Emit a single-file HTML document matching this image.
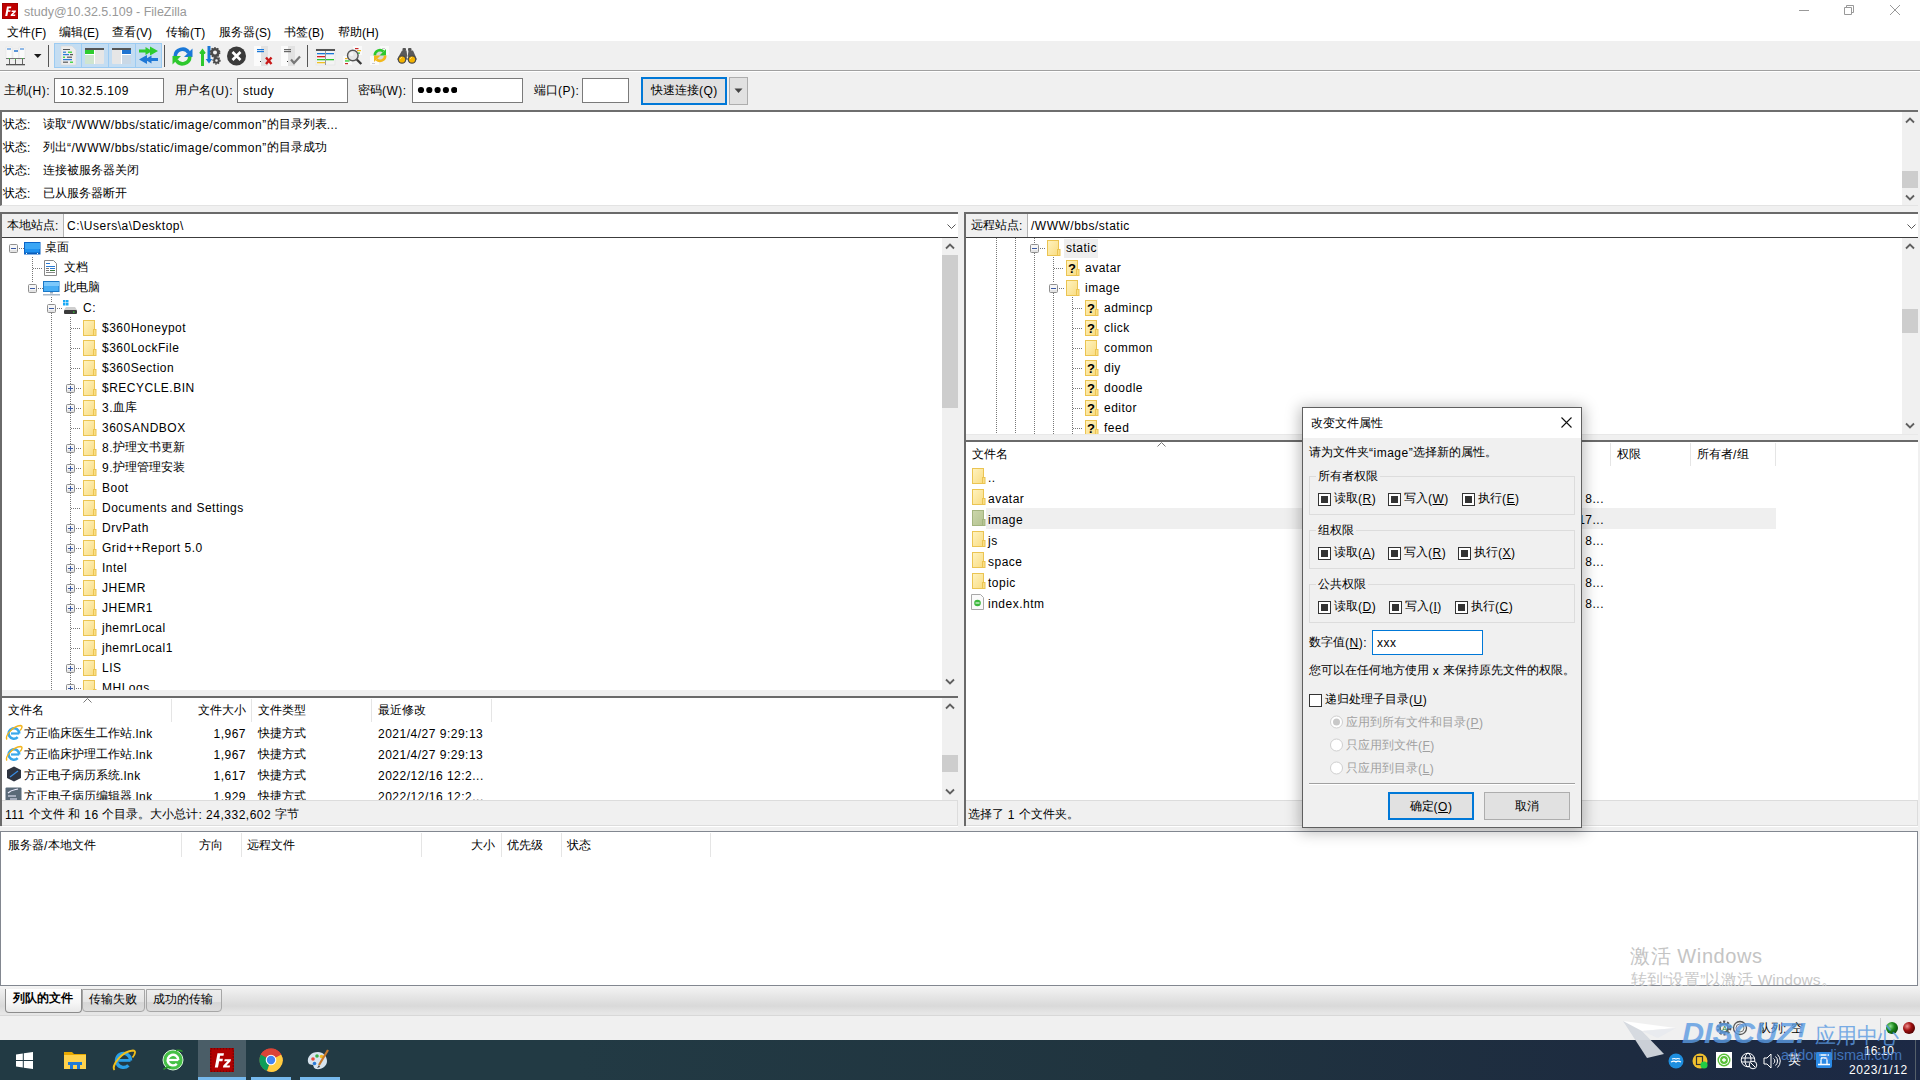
<!DOCTYPE html>
<html><head><meta charset="utf-8">
<style>
*{box-sizing:border-box;margin:0;padding:0}
html,body{width:1920px;height:1080px;overflow:hidden;background:#f0f0f0;font-family:"Liberation Sans",sans-serif;font-size:12px;color:#000}
.a{position:absolute}
.t{position:absolute;white-space:nowrap;line-height:16px;height:16px}
.w{background:#fff}
.l{letter-spacing:.5px;position:relative;top:1px}
.n .l{letter-spacing:0}
.sb{position:absolute;background:#f0f0f0}
.thumb{position:absolute;background:#cdcdcd}
.chev{position:absolute;width:8px;height:8px;border-left:2px solid #606060;border-top:2px solid #606060}
.hd{position:absolute;width:1px;background:#e5e5e5}
.fold{position:absolute;width:14px;height:16px}
</style></head><body>
<svg width="0" height="0" style="position:absolute"><defs><linearGradient id="fy" x1="0" y1="0" x2="1" y2="1"><stop offset="0" stop-color="#fff3c0"/><stop offset="1" stop-color="#f9dc82"/></linearGradient><linearGradient id="fg" x1="0" y1="0" x2="1" y2="1"><stop offset="0" stop-color="#ccd7ac"/><stop offset="1" stop-color="#b3c290"/></linearGradient></defs></svg>

<!-- title + menu (white) -->
<div class="a w" style="left:0;top:0;width:1920px;height:41px"></div>
<svg class="a" style="left:2px;top:3px" width="16" height="16" viewBox="0 0 16 16"><rect x="0" y="0" width="16" height="16" fill="#bf0000"/><rect x="0.5" y="0.5" width="15" height="15" fill="none" stroke="#8a0000" stroke-dasharray="1 1"/><path d="M3.2 13 L5 3.5 H9.3 L9 5.2 H6.7 L6.4 7.2 H8.6 L8.3 8.8 H6.1 L5.3 13 Z M8.6 13 L8.9 11.6 L11.6 8.9 H9.5 L9.8 7.5 H14 L13.7 8.9 L11 11.6 H13.4 L13.1 13 Z" fill="#fff"/></svg>
<div class="t n" style="left:24px;top:3px;color:#999;font-size:12.5px"><span class="l">study@10.32.5.109 - FileZilla</span></div>
<div class="a" style="left:1799px;top:10px;width:10px;height:1px;background:#999"></div>
<svg class="a" style="left:1844px;top:5px" width="11" height="11"><path d="M.5 2.5h7v7h-7z M2.5 2.5v-2h7v7h-2" fill="none" stroke="#999" stroke-width="1"/></svg>
<svg class="a" style="left:1890px;top:5px" width="10" height="10"><path d="M0 0L10 10M10 0L0 10" stroke="#999" stroke-width="1"/></svg>
<div class="t n" style="left:7px;top:24px">文件<span class="l">(F)</span></div>
<div class="t n" style="left:59px;top:24px">编辑<span class="l">(E)</span></div>
<div class="t n" style="left:112px;top:24px">查看<span class="l">(V)</span></div>
<div class="t n" style="left:166px;top:24px">传输<span class="l">(T)</span></div>
<div class="t n" style="left:219px;top:24px">服务器<span class="l">(S)</span></div>
<div class="t n" style="left:284px;top:24px">书签<span class="l">(B)</span></div>
<div class="t n" style="left:338px;top:24px">帮助<span class="l">(H)</span></div>

<!-- toolbar -->
<div class="a" style="left:0;top:70px;width:1920px;height:1px;background:#a0a0a0"></div>
<div class="a" style="left:0;top:71px;width:1920px;height:1px;background:#fff"></div>
<svg class="a" style="left:0;top:41px" width="430" height="29" viewBox="0 41 430 29">
<!-- site manager -->
<g>
<rect x="6" y="47" width="6" height="12" fill="#fafafa" stroke="#ddd" stroke-width=".5"/><rect x="7" y="48" width="4" height="2" fill="#8fb8e6"/>
<rect x="13" y="49" width="6" height="11" fill="#fafafa" stroke="#ddd" stroke-width=".5"/><rect x="14" y="50" width="4" height="2" fill="#5c97d9"/>
<rect x="19" y="47" width="6" height="12" fill="#fafafa" stroke="#ddd" stroke-width=".5"/><rect x="20" y="48" width="4" height="2" fill="#8fb8e6"/>
<rect x="6" y="58" width="19" height="1" fill="#777"/><rect x="9" y="58" width="1" height="1" fill="#3c3"/><rect x="15" y="59" width="1" height="1" fill="#3c3"/><rect x="22" y="58" width="1" height="1" fill="#3c3"/>
<rect x="9" y="59" width="1" height="5" fill="#666"/><rect x="15" y="60" width="1" height="4" fill="#666"/><rect x="22" y="59" width="1" height="5" fill="#666"/>
<rect x="6" y="64" width="19" height="1.3" fill="#555"/>
</g>
<path d="M34 54h7.5l-3.75 4z" fill="#1a1a1a"/>
<rect x="48" y="45" width="1" height="22" fill="#555"/>
<!-- toggle group -->
<rect x="54.5" y="43.5" width="107" height="24" fill="#c4ddf2" stroke="#9ccbf2"/>
<rect x="81" y="44" width="1" height="23" fill="#9ccbf2"/><rect x="108" y="44" width="1" height="23" fill="#9ccbf2"/><rect x="135" y="44" width="1" height="23" fill="#9ccbf2"/>
<!-- log icon -->
<path d="M61 46h11l4 4v15h-15z" fill="#ededed" stroke="#d6d6d6" stroke-width=".6"/>
<rect x="63" y="49" width="7" height="1" fill="#555"/>
<rect x="63" y="51.5" width="3" height="1.5" fill="#4a90d9"/><rect x="68" y="51.5" width="4" height="1.5" fill="#4cd44c"/>
<rect x="63" y="54" width="6" height="1.2" fill="#2b7bd6"/><rect x="70" y="54" width="3" height="1.2" fill="#555"/>
<rect x="63" y="56.5" width="2" height="1.5" fill="#4cd44c"/><rect x="67" y="56.5" width="5" height="1.5" fill="#777"/>
<rect x="63" y="59" width="9" height="1.2" fill="#2b7bd6"/>
<rect x="63" y="61.5" width="5" height="1.5" fill="#777"/><rect x="70" y="61.5" width="3" height="1.5" fill="#4cd44c"/>
<!-- local tree icon -->
<rect x="85" y="48" width="19" height="16" rx="1" fill="#e6e6e6"/><rect x="85" y="48" width="19" height="2" fill="#555"/>
<rect x="85" y="50" width="9" height="4" fill="#2ecc2e"/><rect x="85" y="55" width="9" height="9" fill="#cfe5cf"/><rect x="94" y="50" width="1" height="14" fill="#fff"/><rect x="85" y="54" width="9" height="1" fill="#fff"/>
<!-- remote tree icon -->
<rect x="112" y="48" width="19" height="16" rx="1" fill="#e6e6e6"/><rect x="112" y="48" width="19" height="2" fill="#555"/>
<rect x="122" y="50" width="9" height="4" fill="#1f74d1"/><rect x="122" y="55" width="9" height="9" fill="#c9d8e6"/><rect x="121" y="50" width="1" height="14" fill="#fff"/><rect x="122" y="54" width="9" height="1" fill="#fff"/>
<!-- queue icon -->
<path d="M139 49.5h11v3h-11z M150 46.5l8 4.5-8 4.5z M145.5 47l6.5 4-6.5 4z" fill="#2dcc2d"/>
<path d="M158 58h-11v3h11z M147 55l-8 4.5 8 4.5z M151.5 55.5l-6.5 4 6.5 4z" fill="#1f78d6"/>
<rect x="164" y="45" width="1" height="22" fill="#555"/>
<!-- refresh -->
<path d="M175.2 56.5A7.3 7.3 0 0 1 188.8 52.8" fill="none" stroke="#1a78d8" stroke-width="3.6"/><path d="M192.5 48.5v8.5h-8.5z" fill="#1a78d8"/>
<path d="M189.8 56.5A7.3 7.3 0 0 1 176.2 60.2" fill="none" stroke="#2dc82d" stroke-width="3.6"/><path d="M172.5 64.5v-8.5h8.5z" fill="#2dc82d"/>
<!-- process queue -->
<path d="M201 66v-13h-1.8l3.3-4.5 3.3 4.5h-1.8v13z M199.5 54l3-4 3 4z" fill="#2dc82d"/><path d="M207.5 46h3v13h1.8l-3.3 4.5-3.3-4.5h1.8z" fill="#1a78d8"/>
<circle cx="215" cy="52.5" r="3.3" fill="none" stroke="#4a4a4a" stroke-width="2.6"/><circle cx="215" cy="52.5" r="4.6" fill="none" stroke="#4a4a4a" stroke-width="1.6" stroke-dasharray="1.6 1.3"/>
<circle cx="216.5" cy="60.5" r="2.3" fill="none" stroke="#4a4a4a" stroke-width="2"/><circle cx="216.5" cy="60.5" r="3.5" fill="none" stroke="#4a4a4a" stroke-width="1.3" stroke-dasharray="1.4 1.2"/>
<!-- cancel -->
<circle cx="236.5" cy="56" r="9.5" fill="#3a3a3a"/><path d="M232.5 52l8 8M240.5 52l-8 8" stroke="#fff" stroke-width="2.6"/>
<!-- disconnect -->
<rect x="254" y="46" width="14" height="20" fill="#fbfbfb"/><rect x="261" y="46" width="7" height="20" fill="#e2e2e2"/><rect x="257" y="49" width="7" height="1.2" fill="#1a78d8"/><rect x="257" y="51" width="7" height="1.2" fill="#1a78d8"/><rect x="260" y="61" width="1" height="1" fill="#333"/>
<path d="M266 57.5l5.5 6.5M271.5 57.5l-5.5 6.5" stroke="#c81818" stroke-width="2.4"/>
<!-- reconnect -->
<rect x="281" y="46" width="14" height="20" fill="#fbfbfb"/><rect x="288" y="46" width="7" height="20" fill="#e2e2e2"/><rect x="284" y="49" width="7" height="1.2" fill="#666"/><rect x="284" y="51" width="7" height="1.2" fill="#666"/><rect x="287" y="61" width="1" height="1" fill="#333"/>
<path d="M291 59.5l3 3.5 6-6.5" fill="none" stroke="#777" stroke-width="2.2"/>
<rect x="307" y="45" width="1" height="22" fill="#555"/>
<!-- filter -->
<rect x="316" y="49" width="19" height="16" fill="#f4f4f4" stroke="#ddd" stroke-width=".5"/><rect x="316" y="49" width="19" height="2" fill="#555"/>
<rect x="317" y="53" width="17" height="1.3" fill="#1a78d8"/><rect x="317" y="56" width="9" height="1.3" fill="#d82020"/><rect x="317" y="59" width="17" height="1.3" fill="#2dc82d"/><rect x="317" y="62" width="9" height="1.3" fill="#f0c020"/><rect x="325" y="51" width="1" height="14" fill="#999"/>
<!-- compare -->
<rect x="353" y="46" width="9" height="9" fill="#fafafa"/><rect x="355" y="48" width="3.5" height="1.2" fill="#c82828"/><rect x="357" y="50" width="4" height="1.2" fill="#f2b81c"/><rect x="358" y="52.5" width="2" height="1.2" fill="#2dc82d"/>
<rect x="343" y="56" width="9" height="9" fill="#fafafa"/><rect x="345" y="58" width="2.5" height="1.2" fill="#f2b81c"/><rect x="345" y="60.3" width="4.5" height="1.3" fill="#2dc82d"/><rect x="345" y="63" width="3" height="1.2" fill="#c82828"/>
<path d="M356.8 59.5l4.5 4.5" stroke="#3a3a3a" stroke-width="2.4"/>
<circle cx="352.8" cy="55.5" r="5.3" fill="#e6e6e6" stroke="#555" stroke-width="1.4"/><circle cx="351.5" cy="54" r="2" fill="#f6f6f6"/>
<!-- sync -->
<rect x="380" y="46" width="9" height="9" fill="#fafafa"/><rect x="382" y="48" width="3" height="1" fill="#ccc"/><rect x="370" y="56" width="9" height="9" fill="#fafafa"/><rect x="372" y="63" width="3" height="1" fill="#ccc"/>
<circle cx="380" cy="55.5" r="4.5" fill="#d8d8d8"/>
<path d="M374.8 55.5A5.2 5.2 0 0 1 383.5 51.5" fill="none" stroke="#2dc82d" stroke-width="2.6"/><path d="M386 49v6.5h-6.5z" fill="#2dc82d"/>
<path d="M385.2 55.5A5.2 5.2 0 0 1 376.5 59.5" fill="none" stroke="#f2b81c" stroke-width="2.6"/><path d="M374 62v-6.5h6.5z" fill="#f2b81c"/>
<!-- binoculars -->
<rect x="402.5" y="48" width="3.5" height="3" rx="1" fill="#555"/><rect x="408" y="48" width="3.5" height="3" rx="1" fill="#555"/>
<path d="M402 50.5h4.5l.8 6h-0.5v2h1.4v-2h-.5l.8-6h4.5l4 9h-20z" fill="#5a5a5a"/>
<circle cx="402" cy="59.5" r="4.3" fill="#4a4a4a"/><circle cx="412" cy="59.5" r="4.3" fill="#4a4a4a"/>
<circle cx="402" cy="59.5" r="3.1" fill="#f5b400"/><circle cx="412" cy="59.5" r="3.1" fill="#f5b400"/>
<path d="M400.5 58.5l1-1M410.5 58.5l1-1" stroke="#fff" stroke-width=".9"/>
</svg>

<!-- quickconnect -->
<div class="t" style="left:4px;top:82px">主机<span class="l">(H):</span></div>
<div class="a w" style="left:54px;top:78px;width:110px;height:25px;border:1px solid #7a7a7a"></div>
<div class="t" style="left:60px;top:82px"><span class="l">10.32.5.109</span></div>
<div class="t" style="left:175px;top:82px">用户名<span class="l">(U):</span></div>
<div class="a w" style="left:237px;top:78px;width:111px;height:25px;border:1px solid #7a7a7a"></div>
<div class="t" style="left:243px;top:82px"><span class="l">study</span></div>
<div class="t" style="left:358px;top:82px">密码<span class="l">(W):</span></div>
<div class="a w" style="left:412px;top:78px;width:111px;height:25px;border:1px solid #7a7a7a"></div>
<svg class="a" style="left:417px;top:85px" width="40" height="10"><circle cx="4" cy="5" r="3.1"/><circle cx="12.3" cy="5" r="3.1"/><circle cx="20.6" cy="5" r="3.1"/><circle cx="28.9" cy="5" r="3.1"/><circle cx="37.2" cy="5" r="3.1"/></svg>
<div class="t" style="left:534px;top:82px">端口<span class="l">(P):</span></div>
<div class="a w" style="left:582px;top:78px;width:47px;height:25px;border:1px solid #7a7a7a"></div>
<div class="a" style="left:641px;top:77px;width:86px;height:28px;border:2px solid #0078d7;background:#e1e1e1"></div>
<div class="t" style="left:651px;top:82px">快速连接<span class="l">(Q)</span></div>
<div class="a" style="left:729px;top:77px;width:19px;height:28px;border:1px solid #adadad;background:#e1e1e1"></div>
<svg class="a" style="left:734px;top:88px" width="10" height="6"><path d="M0.5 0.5h8l-4 4.5z" fill="#444"/></svg>

<!-- log -->
<div class="a w" style="left:0;top:110px;width:1918px;height:96px;border-top:2px solid #6e6e6e;border-left:2px solid #6e6e6e;border-bottom:1px solid #e3e3e3"></div>
<div class="t" style="left:3px;top:116px">状态<span class="l">:</span></div><div class="t" style="left:43px;top:116px">读取<span class="l">“/WWW/bbs/static/image/common”</span>的目录列表<span class="l">...</span></div>
<div class="t" style="left:3px;top:139px">状态<span class="l">:</span></div><div class="t" style="left:43px;top:139px">列出<span class="l">“/WWW/bbs/static/image/common”</span>的目录成功</div>
<div class="t" style="left:3px;top:162px">状态<span class="l">:</span></div><div class="t" style="left:43px;top:162px">连接被服务器关闭</div>
<div class="t" style="left:3px;top:185px">状态<span class="l">:</span></div><div class="t" style="left:43px;top:185px">已从服务器断开</div>
<div class="sb" style="left:1902px;top:112px;width:16px;height:93px"></div>
<div class="thumb" style="left:1902px;top:171px;width:16px;height:17px"></div>
<svg class="a" style="left:1905px;top:117px" width="10" height="7"><path d="M1 5.5l4-4 4 4" fill="none" stroke="#606060" stroke-width="1.8"/></svg>
<svg class="a" style="left:1905px;top:194px" width="10" height="7"><path d="M1 1.5l4 4 4-4" fill="none" stroke="#606060" stroke-width="1.8"/></svg>

<!-- local panel -->
<div class="a" style="left:0px;top:212px;width:958px;height:2px;background:#6a6a6a"></div><div class="a" style="left:0px;top:212px;width:2px;height:614px;background:#6a6a6a"></div><div class="a" style="left:2px;top:214px;width:62px;height:23px;background:#f0f0f0;border-right:1px solid #b4b4b4"></div><div class="t" style="left:7px;top:217px;">本地站点<span class="l">:</span></div><div class="a" style="left:64px;top:214px;width:894px;height:23px;background:#fff"></div><div class="t" style="left:67px;top:217px;"><span class="l">C:\Users\a\Desktop\</span></div><svg class="a" style="left:947px;top:224px" width="9" height="6"><path d="M.5 .5l4 4 4-4" fill="none" stroke="#555" stroke-width="1"/></svg><div class="a" style="left:2px;top:237px;width:956px;height:1px;background:#3c3c3c"></div><div class="a" style="left:2px;top:238px;width:956px;height:452px;background:#fff"></div><div class="sb" style="left:942px;top:238px;width:16px;height:452px"></div><div class="thumb" style="left:942px;top:255px;width:16px;height:153px"></div><svg class="a" style="left:945px;top:243px" width="10" height="7"><path d="M1 5.5l4-4 4 4" fill="none" stroke="#606060" stroke-width="1.8"/></svg><svg class="a" style="left:945px;top:678px" width="10" height="7"><path d="M1 1.5l4 4 4-4" fill="none" stroke="#606060" stroke-width="1.8"/></svg><div class="a" style="left:2px;top:238px;width:940px;height:452px;overflow:hidden"><div class="a" style="left:-2px;top:-238px;width:1920px;height:1080px"><div class="a" style="left:32px;top:257px;width:1px;height:26px;background:repeating-linear-gradient(#777 0 1px,transparent 1px 2px)"></div><div class="a" style="left:51px;top:297px;width:1px;height:6px;background:repeating-linear-gradient(#777 0 1px,transparent 1px 2px)"></div><div class="a" style="left:51px;top:313px;width:1px;height:387px;background:repeating-linear-gradient(#777 0 1px,transparent 1px 2px)"></div><div class="a" style="left:70px;top:317px;width:1px;height:383px;background:repeating-linear-gradient(#777 0 1px,transparent 1px 2px)"></div><svg class="a" style="left:9px;top:244px" width="9" height="9"><rect x=".5" y=".5" width="8" height="8" rx="1" fill="#f6f6f6" stroke="#8f8f8f"/><rect x="1" y="6" width="7" height="2" fill="#e4e4e4"/><rect x="2" y="4" width="5" height="1" fill="#3b5aa3"/></svg><div class="a" style="left:19px;top:248px;width:5px;height:1px;background:repeating-linear-gradient(90deg,#777 0 1px,transparent 1px 2px)"></div><svg class="a" style="left:24px;top:242px" width="17" height="13"><rect x=".5" y=".5" width="15.5" height="11.5" fill="#1e90ef" stroke="#0a64c8"/><rect x="1" y="1" width="15" height="6" fill="#3aa6f5"/><rect x="1" y="10.5" width="15" height="1.5" fill="#0b5cb8"/><rect x="2" y="11" width="1" height="1" fill="#fff"/><rect x="13" y="11" width="1" height="1" fill="#fff"/></svg><div class="t" style="left:45px;top:239px;">桌面</div><div class="a" style="left:33px;top:268px;width:10px;height:1px;background:repeating-linear-gradient(90deg,#777 0 1px,transparent 1px 2px)"></div><svg class="a" style="left:44px;top:260px" width="13" height="16"><path d="M.5 .5h9l3 3v12h-12z" fill="#fff" stroke="#888"/><rect x="2" y="3" width="4" height="1" fill="#2a7ad2"/><rect x="2" y="6" width="9" height="1" fill="#2a7ad2"/><rect x="2" y="8" width="3" height="1" fill="#777"/><rect x="6" y="8" width="5" height="1" fill="#2a7ad2"/><rect x="2" y="10" width="3" height="1" fill="#777"/><rect x="6" y="10" width="5" height="1" fill="#3a7a3a"/><rect x="2" y="12" width="9" height="1" fill="#888"/></svg><div class="t" style="left:64px;top:259px;">文档</div><svg class="a" style="left:28px;top:284px" width="9" height="9"><rect x=".5" y=".5" width="8" height="8" rx="1" fill="#f6f6f6" stroke="#8f8f8f"/><rect x="1" y="6" width="7" height="2" fill="#e4e4e4"/><rect x="2" y="4" width="5" height="1" fill="#3b5aa3"/></svg><div class="a" style="left:38px;top:288px;width:5px;height:1px;background:repeating-linear-gradient(90deg,#777 0 1px,transparent 1px 2px)"></div><svg class="a" style="left:43px;top:281px" width="17" height="15"><rect x=".5" y=".5" width="15.5" height="10" fill="#48aef5" stroke="#1a78c8"/><rect x="1" y="1" width="15" height="4" fill="#7cc8fb"/><rect x="7" y="11" width="3" height="1.5" fill="#9ab"/><rect x="0" y="13" width="17" height="1.5" fill="#a8b8c8"/></svg><div class="t" style="left:64px;top:279px;">此电脑</div><svg class="a" style="left:47px;top:304px" width="9" height="9"><rect x=".5" y=".5" width="8" height="8" rx="1" fill="#f6f6f6" stroke="#8f8f8f"/><rect x="1" y="6" width="7" height="2" fill="#e4e4e4"/><rect x="2" y="4" width="5" height="1" fill="#3b5aa3"/></svg><div class="a" style="left:57px;top:308px;width:5px;height:1px;background:repeating-linear-gradient(90deg,#777 0 1px,transparent 1px 2px)"></div><svg class="a" style="left:62px;top:300px" width="16" height="16"><rect x="1" y="0" width="2.5" height="2.5" fill="#19a9f5"/><rect x="4" y="0" width="2.5" height="2.5" fill="#19a9f5"/><rect x="1" y="3" width="2.5" height="2.5" fill="#19a9f5"/><rect x="4" y="3" width="2.5" height="2.5" fill="#19a9f5"/><path d="M2 10l2-3h9l2 3z" fill="#cfcfcf"/><rect x="2" y="10" width="13" height="4" rx="1" fill="#3a3a3a"/><rect x="11" y="11.5" width="1.5" height="1.2" fill="#3c3"/></svg><div class="t" style="left:83px;top:299px;"><span class="l">C:</span></div><div class="a" style="left:71px;top:328px;width:10px;height:1px;background:repeating-linear-gradient(90deg,#777 0 1px,transparent 1px 2px)"></div><svg class="a" style="left:83px;top:320px" width="14" height="16"><rect x=".5" y=".5" width="11" height="15" fill="url(#fy)" stroke="#ebc452"/><rect x="10.5" y="9.5" width="2.5" height="6" fill="#fbdf86" stroke="#ebc452"/></svg><div class="t" style="left:102px;top:319px;"><span class="l">$360Honeypot</span></div><div class="a" style="left:71px;top:348px;width:10px;height:1px;background:repeating-linear-gradient(90deg,#777 0 1px,transparent 1px 2px)"></div><svg class="a" style="left:83px;top:340px" width="14" height="16"><rect x=".5" y=".5" width="11" height="15" fill="url(#fy)" stroke="#ebc452"/><rect x="10.5" y="9.5" width="2.5" height="6" fill="#fbdf86" stroke="#ebc452"/></svg><div class="t" style="left:102px;top:339px;"><span class="l">$360LockFile</span></div><div class="a" style="left:71px;top:368px;width:10px;height:1px;background:repeating-linear-gradient(90deg,#777 0 1px,transparent 1px 2px)"></div><svg class="a" style="left:83px;top:360px" width="14" height="16"><rect x=".5" y=".5" width="11" height="15" fill="url(#fy)" stroke="#ebc452"/><rect x="10.5" y="9.5" width="2.5" height="6" fill="#fbdf86" stroke="#ebc452"/></svg><div class="t" style="left:102px;top:359px;"><span class="l">$360Section</span></div><svg class="a" style="left:66px;top:384px" width="9" height="9"><rect x=".5" y=".5" width="8" height="8" rx="1" fill="#f6f6f6" stroke="#8f8f8f"/><rect x="1" y="6" width="7" height="2" fill="#e4e4e4"/><rect x="2" y="4" width="5" height="1" fill="#3b5aa3"/><rect x="4" y="2" width="1" height="5" fill="#3b5aa3"/></svg><div class="a" style="left:76px;top:388px;width:5px;height:1px;background:repeating-linear-gradient(90deg,#777 0 1px,transparent 1px 2px)"></div><svg class="a" style="left:83px;top:380px" width="14" height="16"><rect x=".5" y=".5" width="11" height="15" fill="url(#fy)" stroke="#ebc452"/><rect x="10.5" y="9.5" width="2.5" height="6" fill="#fbdf86" stroke="#ebc452"/></svg><div class="t" style="left:102px;top:379px;"><span class="l">$RECYCLE.BIN</span></div><svg class="a" style="left:66px;top:404px" width="9" height="9"><rect x=".5" y=".5" width="8" height="8" rx="1" fill="#f6f6f6" stroke="#8f8f8f"/><rect x="1" y="6" width="7" height="2" fill="#e4e4e4"/><rect x="2" y="4" width="5" height="1" fill="#3b5aa3"/><rect x="4" y="2" width="1" height="5" fill="#3b5aa3"/></svg><div class="a" style="left:76px;top:408px;width:5px;height:1px;background:repeating-linear-gradient(90deg,#777 0 1px,transparent 1px 2px)"></div><svg class="a" style="left:83px;top:400px" width="14" height="16"><rect x=".5" y=".5" width="11" height="15" fill="url(#fy)" stroke="#ebc452"/><rect x="10.5" y="9.5" width="2.5" height="6" fill="#fbdf86" stroke="#ebc452"/></svg><div class="t" style="left:102px;top:399px;"><span class="l">3.</span>血库</div><div class="a" style="left:71px;top:428px;width:10px;height:1px;background:repeating-linear-gradient(90deg,#777 0 1px,transparent 1px 2px)"></div><svg class="a" style="left:83px;top:420px" width="14" height="16"><rect x=".5" y=".5" width="11" height="15" fill="url(#fy)" stroke="#ebc452"/><rect x="10.5" y="9.5" width="2.5" height="6" fill="#fbdf86" stroke="#ebc452"/></svg><div class="t" style="left:102px;top:419px;"><span class="l">360SANDBOX</span></div><svg class="a" style="left:66px;top:444px" width="9" height="9"><rect x=".5" y=".5" width="8" height="8" rx="1" fill="#f6f6f6" stroke="#8f8f8f"/><rect x="1" y="6" width="7" height="2" fill="#e4e4e4"/><rect x="2" y="4" width="5" height="1" fill="#3b5aa3"/><rect x="4" y="2" width="1" height="5" fill="#3b5aa3"/></svg><div class="a" style="left:76px;top:448px;width:5px;height:1px;background:repeating-linear-gradient(90deg,#777 0 1px,transparent 1px 2px)"></div><svg class="a" style="left:83px;top:440px" width="14" height="16"><rect x=".5" y=".5" width="11" height="15" fill="url(#fy)" stroke="#ebc452"/><rect x="10.5" y="9.5" width="2.5" height="6" fill="#fbdf86" stroke="#ebc452"/></svg><div class="t" style="left:102px;top:439px;"><span class="l">8.</span>护理文书更新</div><svg class="a" style="left:66px;top:464px" width="9" height="9"><rect x=".5" y=".5" width="8" height="8" rx="1" fill="#f6f6f6" stroke="#8f8f8f"/><rect x="1" y="6" width="7" height="2" fill="#e4e4e4"/><rect x="2" y="4" width="5" height="1" fill="#3b5aa3"/><rect x="4" y="2" width="1" height="5" fill="#3b5aa3"/></svg><div class="a" style="left:76px;top:468px;width:5px;height:1px;background:repeating-linear-gradient(90deg,#777 0 1px,transparent 1px 2px)"></div><svg class="a" style="left:83px;top:460px" width="14" height="16"><rect x=".5" y=".5" width="11" height="15" fill="url(#fy)" stroke="#ebc452"/><rect x="10.5" y="9.5" width="2.5" height="6" fill="#fbdf86" stroke="#ebc452"/></svg><div class="t" style="left:102px;top:459px;"><span class="l">9.</span>护理管理安装</div><svg class="a" style="left:66px;top:484px" width="9" height="9"><rect x=".5" y=".5" width="8" height="8" rx="1" fill="#f6f6f6" stroke="#8f8f8f"/><rect x="1" y="6" width="7" height="2" fill="#e4e4e4"/><rect x="2" y="4" width="5" height="1" fill="#3b5aa3"/><rect x="4" y="2" width="1" height="5" fill="#3b5aa3"/></svg><div class="a" style="left:76px;top:488px;width:5px;height:1px;background:repeating-linear-gradient(90deg,#777 0 1px,transparent 1px 2px)"></div><svg class="a" style="left:83px;top:480px" width="14" height="16"><rect x=".5" y=".5" width="11" height="15" fill="url(#fy)" stroke="#ebc452"/><rect x="10.5" y="9.5" width="2.5" height="6" fill="#fbdf86" stroke="#ebc452"/></svg><div class="t" style="left:102px;top:479px;"><span class="l">Boot</span></div><div class="a" style="left:71px;top:508px;width:10px;height:1px;background:repeating-linear-gradient(90deg,#777 0 1px,transparent 1px 2px)"></div><svg class="a" style="left:83px;top:500px" width="14" height="16"><rect x=".5" y=".5" width="11" height="15" fill="url(#fy)" stroke="#ebc452"/><rect x="10.5" y="9.5" width="2.5" height="6" fill="#fbdf86" stroke="#ebc452"/></svg><div class="t" style="left:102px;top:499px;"><span class="l">Documents and Settings</span></div><svg class="a" style="left:66px;top:524px" width="9" height="9"><rect x=".5" y=".5" width="8" height="8" rx="1" fill="#f6f6f6" stroke="#8f8f8f"/><rect x="1" y="6" width="7" height="2" fill="#e4e4e4"/><rect x="2" y="4" width="5" height="1" fill="#3b5aa3"/><rect x="4" y="2" width="1" height="5" fill="#3b5aa3"/></svg><div class="a" style="left:76px;top:528px;width:5px;height:1px;background:repeating-linear-gradient(90deg,#777 0 1px,transparent 1px 2px)"></div><svg class="a" style="left:83px;top:520px" width="14" height="16"><rect x=".5" y=".5" width="11" height="15" fill="url(#fy)" stroke="#ebc452"/><rect x="10.5" y="9.5" width="2.5" height="6" fill="#fbdf86" stroke="#ebc452"/></svg><div class="t" style="left:102px;top:519px;"><span class="l">DrvPath</span></div><svg class="a" style="left:66px;top:544px" width="9" height="9"><rect x=".5" y=".5" width="8" height="8" rx="1" fill="#f6f6f6" stroke="#8f8f8f"/><rect x="1" y="6" width="7" height="2" fill="#e4e4e4"/><rect x="2" y="4" width="5" height="1" fill="#3b5aa3"/><rect x="4" y="2" width="1" height="5" fill="#3b5aa3"/></svg><div class="a" style="left:76px;top:548px;width:5px;height:1px;background:repeating-linear-gradient(90deg,#777 0 1px,transparent 1px 2px)"></div><svg class="a" style="left:83px;top:540px" width="14" height="16"><rect x=".5" y=".5" width="11" height="15" fill="url(#fy)" stroke="#ebc452"/><rect x="10.5" y="9.5" width="2.5" height="6" fill="#fbdf86" stroke="#ebc452"/></svg><div class="t" style="left:102px;top:539px;"><span class="l">Grid++Report 5.0</span></div><svg class="a" style="left:66px;top:564px" width="9" height="9"><rect x=".5" y=".5" width="8" height="8" rx="1" fill="#f6f6f6" stroke="#8f8f8f"/><rect x="1" y="6" width="7" height="2" fill="#e4e4e4"/><rect x="2" y="4" width="5" height="1" fill="#3b5aa3"/><rect x="4" y="2" width="1" height="5" fill="#3b5aa3"/></svg><div class="a" style="left:76px;top:568px;width:5px;height:1px;background:repeating-linear-gradient(90deg,#777 0 1px,transparent 1px 2px)"></div><svg class="a" style="left:83px;top:560px" width="14" height="16"><rect x=".5" y=".5" width="11" height="15" fill="url(#fy)" stroke="#ebc452"/><rect x="10.5" y="9.5" width="2.5" height="6" fill="#fbdf86" stroke="#ebc452"/></svg><div class="t" style="left:102px;top:559px;"><span class="l">Intel</span></div><svg class="a" style="left:66px;top:584px" width="9" height="9"><rect x=".5" y=".5" width="8" height="8" rx="1" fill="#f6f6f6" stroke="#8f8f8f"/><rect x="1" y="6" width="7" height="2" fill="#e4e4e4"/><rect x="2" y="4" width="5" height="1" fill="#3b5aa3"/><rect x="4" y="2" width="1" height="5" fill="#3b5aa3"/></svg><div class="a" style="left:76px;top:588px;width:5px;height:1px;background:repeating-linear-gradient(90deg,#777 0 1px,transparent 1px 2px)"></div><svg class="a" style="left:83px;top:580px" width="14" height="16"><rect x=".5" y=".5" width="11" height="15" fill="url(#fy)" stroke="#ebc452"/><rect x="10.5" y="9.5" width="2.5" height="6" fill="#fbdf86" stroke="#ebc452"/></svg><div class="t" style="left:102px;top:579px;"><span class="l">JHEMR</span></div><svg class="a" style="left:66px;top:604px" width="9" height="9"><rect x=".5" y=".5" width="8" height="8" rx="1" fill="#f6f6f6" stroke="#8f8f8f"/><rect x="1" y="6" width="7" height="2" fill="#e4e4e4"/><rect x="2" y="4" width="5" height="1" fill="#3b5aa3"/><rect x="4" y="2" width="1" height="5" fill="#3b5aa3"/></svg><div class="a" style="left:76px;top:608px;width:5px;height:1px;background:repeating-linear-gradient(90deg,#777 0 1px,transparent 1px 2px)"></div><svg class="a" style="left:83px;top:600px" width="14" height="16"><rect x=".5" y=".5" width="11" height="15" fill="url(#fy)" stroke="#ebc452"/><rect x="10.5" y="9.5" width="2.5" height="6" fill="#fbdf86" stroke="#ebc452"/></svg><div class="t" style="left:102px;top:599px;"><span class="l">JHEMR1</span></div><div class="a" style="left:71px;top:628px;width:10px;height:1px;background:repeating-linear-gradient(90deg,#777 0 1px,transparent 1px 2px)"></div><svg class="a" style="left:83px;top:620px" width="14" height="16"><rect x=".5" y=".5" width="11" height="15" fill="url(#fy)" stroke="#ebc452"/><rect x="10.5" y="9.5" width="2.5" height="6" fill="#fbdf86" stroke="#ebc452"/></svg><div class="t" style="left:102px;top:619px;"><span class="l">jhemrLocal</span></div><div class="a" style="left:71px;top:648px;width:10px;height:1px;background:repeating-linear-gradient(90deg,#777 0 1px,transparent 1px 2px)"></div><svg class="a" style="left:83px;top:640px" width="14" height="16"><rect x=".5" y=".5" width="11" height="15" fill="url(#fy)" stroke="#ebc452"/><rect x="10.5" y="9.5" width="2.5" height="6" fill="#fbdf86" stroke="#ebc452"/></svg><div class="t" style="left:102px;top:639px;"><span class="l">jhemrLocal1</span></div><svg class="a" style="left:66px;top:664px" width="9" height="9"><rect x=".5" y=".5" width="8" height="8" rx="1" fill="#f6f6f6" stroke="#8f8f8f"/><rect x="1" y="6" width="7" height="2" fill="#e4e4e4"/><rect x="2" y="4" width="5" height="1" fill="#3b5aa3"/><rect x="4" y="2" width="1" height="5" fill="#3b5aa3"/></svg><div class="a" style="left:76px;top:668px;width:5px;height:1px;background:repeating-linear-gradient(90deg,#777 0 1px,transparent 1px 2px)"></div><svg class="a" style="left:83px;top:660px" width="14" height="16"><rect x=".5" y=".5" width="11" height="15" fill="url(#fy)" stroke="#ebc452"/><rect x="10.5" y="9.5" width="2.5" height="6" fill="#fbdf86" stroke="#ebc452"/></svg><div class="t" style="left:102px;top:659px;"><span class="l">LIS</span></div><svg class="a" style="left:66px;top:684px" width="9" height="9"><rect x=".5" y=".5" width="8" height="8" rx="1" fill="#f6f6f6" stroke="#8f8f8f"/><rect x="1" y="6" width="7" height="2" fill="#e4e4e4"/><rect x="2" y="4" width="5" height="1" fill="#3b5aa3"/><rect x="4" y="2" width="1" height="5" fill="#3b5aa3"/></svg><div class="a" style="left:76px;top:688px;width:5px;height:1px;background:repeating-linear-gradient(90deg,#777 0 1px,transparent 1px 2px)"></div><svg class="a" style="left:83px;top:680px" width="14" height="16"><rect x=".5" y=".5" width="11" height="15" fill="url(#fy)" stroke="#ebc452"/><rect x="10.5" y="9.5" width="2.5" height="6" fill="#fbdf86" stroke="#ebc452"/></svg><div class="t" style="left:102px;top:679px;"><span class="l">MHLogs</span></div></div></div><div class="a" style="left:2px;top:690px;width:956px;height:6px;background:#f0f0f0"></div><div class="a" style="left:0px;top:696px;width:958px;height:2px;background:#6a6a6a"></div><div class="a" style="left:2px;top:698px;width:956px;height:102px;background:#fff"></div><div class="a" style="left:171px;top:699px;width:1px;height:23px;background:#e5e5e5"></div><div class="a" style="left:251px;top:699px;width:1px;height:23px;background:#e5e5e5"></div><div class="a" style="left:371px;top:699px;width:1px;height:23px;background:#e5e5e5"></div><div class="a" style="left:491px;top:699px;width:1px;height:23px;background:#e5e5e5"></div><div class="t" style="left:8px;top:702px;">文件名</div><svg class="a" style="left:83px;top:698px" width="9" height="5"><path d="M.5 4.5l4-4 4 4" fill="none" stroke="#777" stroke-width="1"/></svg><div class="t" style="left:198px;top:702px;">文件大小</div><div class="t" style="left:258px;top:702px;">文件类型</div><div class="t" style="left:378px;top:702px;">最近修改</div><div class="a" style="left:2px;top:698px;width:940px;height:102px;overflow:hidden"><div class="a" style="left:-2px;top:-698px;width:1920px;height:1080px"><svg class="a" style="left:5px;top:724px" width="18" height="17"><path d="M14.2 9.5A5.3 5.3 0 1 0 12.7 13.2" fill="none" stroke="#3aa8ea" stroke-width="2.6"/><rect x="6" y="8.4" width="8.2" height="2.2" fill="#3aa8ea"/><path d="M2 15.5C-.5 12 8 2 15.5 1.5c2.2 0 1.8 2.5-.4 5" fill="none" stroke="#f2b41c" stroke-width="1.4"/></svg><div class="t" style="left:24px;top:725px;">方正临床医生工作站<span class="l">.lnk</span></div><div class="t" style="left:246px;top:725px;transform:translateX(-100%)"><span class="l">1,967</span></div><div class="t" style="left:258px;top:725px;">快捷方式</div><div class="t" style="left:378px;top:725px;"><span class="l">2021/4/27 9:29:13</span></div><svg class="a" style="left:5px;top:745px" width="18" height="17"><path d="M14.2 9.5A5.3 5.3 0 1 0 12.7 13.2" fill="none" stroke="#3aa8ea" stroke-width="2.6"/><rect x="6" y="8.4" width="8.2" height="2.2" fill="#3aa8ea"/><path d="M2 15.5C-.5 12 8 2 15.5 1.5c2.2 0 1.8 2.5-.4 5" fill="none" stroke="#f2b41c" stroke-width="1.4"/></svg><div class="t" style="left:24px;top:746px;">方正临床护理工作站<span class="l">.lnk</span></div><div class="t" style="left:246px;top:746px;transform:translateX(-100%)"><span class="l">1,967</span></div><div class="t" style="left:258px;top:746px;">快捷方式</div><div class="t" style="left:378px;top:746px;"><span class="l">2021/4/27 9:29:13</span></div><svg class="a" style="left:6px;top:766px" width="16" height="16"><path d="M8 0.5l7 3.5v8l-7 3.5-7-3.5v-8z" fill="#2e3440"/><path d="M4 11l8-6" stroke="#3a8ee6" stroke-width="1.2"/></svg><div class="t" style="left:24px;top:767px;">方正电子病历系统<span class="l">.lnk</span></div><div class="t" style="left:246px;top:767px;transform:translateX(-100%)"><span class="l">1,617</span></div><div class="t" style="left:258px;top:767px;">快捷方式</div><div class="t" style="left:378px;top:767px;"><span class="l">2022/12/16 12:2...</span></div><svg class="a" style="left:5px;top:787px" width="17" height="16"><rect x=".5" y=".5" width="16" height="15" rx="1" fill="#5a6a78"/><path d="M3 6c3-3 6-3 10-4M3 9h8M5 12h7" stroke="#eef" stroke-width="1.2" fill="none"/></svg><div class="t" style="left:24px;top:788px;">方正电子病历编辑器<span class="l">.lnk</span></div><div class="t" style="left:246px;top:788px;transform:translateX(-100%)"><span class="l">1,929</span></div><div class="t" style="left:258px;top:788px;">快捷方式</div><div class="t" style="left:378px;top:788px;"><span class="l">2022/12/16 12:2...</span></div></div></div><div class="sb" style="left:942px;top:698px;width:16px;height:102px"></div><div class="thumb" style="left:942px;top:755px;width:16px;height:17px"></div><svg class="a" style="left:945px;top:703px" width="10" height="7"><path d="M1 5.5l4-4 4 4" fill="none" stroke="#606060" stroke-width="1.8"/></svg><svg class="a" style="left:945px;top:788px" width="10" height="7"><path d="M1 1.5l4 4 4-4" fill="none" stroke="#606060" stroke-width="1.8"/></svg><div class="a" style="left:2px;top:800px;width:956px;height:27px;background:#f0f0f0;border-top:1px solid #dcdcdc;border-bottom:1px solid #fff"></div><div class="a" style="left:2px;top:825px;width:956px;height:1px;background:#dcdcdc"></div><div class="a" style="left:957px;top:800px;width:1px;height:25px;background:#dcdcdc"></div><div class="t" style="left:5px;top:806px;"><span class="l">111 </span>个文件<span class="l"> </span>和<span class="l"> 16 </span>个目录。大小总计<span class="l">: 24,332,602 </span>字节</div>

<!-- remote panel -->
<div class="a" style="left:964px;top:212px;width:954px;height:2px;background:#6a6a6a"></div><div class="a" style="left:964px;top:212px;width:2px;height:614px;background:#6a6a6a"></div><div class="a" style="left:966px;top:214px;width:62px;height:23px;background:#f0f0f0;border-right:1px solid #b4b4b4"></div><div class="t" style="left:971px;top:217px;">远程站点<span class="l">:</span></div><div class="a" style="left:1028px;top:214px;width:890px;height:23px;background:#fff"></div><div class="t" style="left:1031px;top:217px;"><span class="l">/WWW/bbs/static</span></div><svg class="a" style="left:1907px;top:224px" width="9" height="6"><path d="M.5 .5l4 4 4-4" fill="none" stroke="#555" stroke-width="1"/></svg><div class="a" style="left:966px;top:237px;width:952px;height:1px;background:#3c3c3c"></div><div class="a" style="left:966px;top:238px;width:952px;height:197px;background:#fff"></div><div class="a" style="left:966px;top:434px;width:952px;height:1px;background:#e8e8e8"></div><div class="a" style="left:966px;top:238px;width:936px;height:196px;overflow:hidden"><div class="a" style="left:-966px;top:-238px;width:1920px;height:1080px"><div class="a" style="left:996px;top:238px;width:1px;height:202px;background:repeating-linear-gradient(#777 0 1px,transparent 1px 2px)"></div><div class="a" style="left:1015px;top:238px;width:1px;height:202px;background:repeating-linear-gradient(#777 0 1px,transparent 1px 2px)"></div><div class="a" style="left:1034px;top:238px;width:1px;height:5px;background:repeating-linear-gradient(#777 0 1px,transparent 1px 2px)"></div><div class="a" style="left:1034px;top:253px;width:1px;height:187px;background:repeating-linear-gradient(#777 0 1px,transparent 1px 2px)"></div><div class="a" style="left:1053px;top:257px;width:1px;height:26px;background:repeating-linear-gradient(#777 0 1px,transparent 1px 2px)"></div><div class="a" style="left:1053px;top:293px;width:1px;height:147px;background:repeating-linear-gradient(#777 0 1px,transparent 1px 2px)"></div><div class="a" style="left:1072px;top:297px;width:1px;height:143px;background:repeating-linear-gradient(#777 0 1px,transparent 1px 2px)"></div><div class="a" style="left:1064px;top:239px;width:34px;height:19px;background:#eeeeee"></div><svg class="a" style="left:1030px;top:244px" width="9" height="9"><rect x=".5" y=".5" width="8" height="8" rx="1" fill="#f6f6f6" stroke="#8f8f8f"/><rect x="1" y="6" width="7" height="2" fill="#e4e4e4"/><rect x="2" y="4" width="5" height="1" fill="#3b5aa3"/></svg><div class="a" style="left:1040px;top:248px;width:5px;height:1px;background:repeating-linear-gradient(90deg,#777 0 1px,transparent 1px 2px)"></div><svg class="a" style="left:1047px;top:240px" width="14" height="16"><rect x=".5" y=".5" width="11" height="15" fill="url(#fy)" stroke="#ebc452"/><rect x="10.5" y="9.5" width="2.5" height="6" fill="#fbdf86" stroke="#ebc452"/></svg><div class="t" style="left:1066px;top:239px;"><span class="l">static</span></div><div class="a" style="left:1054px;top:268px;width:10px;height:1px;background:repeating-linear-gradient(90deg,#777 0 1px,transparent 1px 2px)"></div><svg class="a" style="left:1066px;top:260px" width="14" height="16"><rect x=".5" y=".5" width="11" height="15" fill="url(#fy)" stroke="#ebc452"/><rect x="10.5" y="9.5" width="2.5" height="6" fill="#fbdf86" stroke="#ebc452"/><text x="6" y="13" font-family="Liberation Sans" font-weight="bold" font-size="13" text-anchor="middle" fill="#000">?</text></svg><div class="t" style="left:1085px;top:259px;"><span class="l">avatar</span></div><svg class="a" style="left:1049px;top:284px" width="9" height="9"><rect x=".5" y=".5" width="8" height="8" rx="1" fill="#f6f6f6" stroke="#8f8f8f"/><rect x="1" y="6" width="7" height="2" fill="#e4e4e4"/><rect x="2" y="4" width="5" height="1" fill="#3b5aa3"/></svg><div class="a" style="left:1059px;top:288px;width:5px;height:1px;background:repeating-linear-gradient(90deg,#777 0 1px,transparent 1px 2px)"></div><svg class="a" style="left:1066px;top:280px" width="14" height="16"><rect x=".5" y=".5" width="11" height="15" fill="url(#fy)" stroke="#ebc452"/><rect x="10.5" y="9.5" width="2.5" height="6" fill="#fbdf86" stroke="#ebc452"/></svg><div class="t" style="left:1085px;top:279px;"><span class="l">image</span></div><div class="a" style="left:1073px;top:308px;width:10px;height:1px;background:repeating-linear-gradient(90deg,#777 0 1px,transparent 1px 2px)"></div><svg class="a" style="left:1085px;top:300px" width="14" height="16"><rect x=".5" y=".5" width="11" height="15" fill="url(#fy)" stroke="#ebc452"/><rect x="10.5" y="9.5" width="2.5" height="6" fill="#fbdf86" stroke="#ebc452"/><text x="6" y="13" font-family="Liberation Sans" font-weight="bold" font-size="13" text-anchor="middle" fill="#000">?</text></svg><div class="t" style="left:1104px;top:299px;"><span class="l">admincp</span></div><div class="a" style="left:1073px;top:328px;width:10px;height:1px;background:repeating-linear-gradient(90deg,#777 0 1px,transparent 1px 2px)"></div><svg class="a" style="left:1085px;top:320px" width="14" height="16"><rect x=".5" y=".5" width="11" height="15" fill="url(#fy)" stroke="#ebc452"/><rect x="10.5" y="9.5" width="2.5" height="6" fill="#fbdf86" stroke="#ebc452"/><text x="6" y="13" font-family="Liberation Sans" font-weight="bold" font-size="13" text-anchor="middle" fill="#000">?</text></svg><div class="t" style="left:1104px;top:319px;"><span class="l">click</span></div><div class="a" style="left:1073px;top:348px;width:10px;height:1px;background:repeating-linear-gradient(90deg,#777 0 1px,transparent 1px 2px)"></div><svg class="a" style="left:1085px;top:340px" width="14" height="16"><rect x=".5" y=".5" width="11" height="15" fill="url(#fy)" stroke="#ebc452"/><rect x="10.5" y="9.5" width="2.5" height="6" fill="#fbdf86" stroke="#ebc452"/></svg><div class="t" style="left:1104px;top:339px;"><span class="l">common</span></div><div class="a" style="left:1073px;top:368px;width:10px;height:1px;background:repeating-linear-gradient(90deg,#777 0 1px,transparent 1px 2px)"></div><svg class="a" style="left:1085px;top:360px" width="14" height="16"><rect x=".5" y=".5" width="11" height="15" fill="url(#fy)" stroke="#ebc452"/><rect x="10.5" y="9.5" width="2.5" height="6" fill="#fbdf86" stroke="#ebc452"/><text x="6" y="13" font-family="Liberation Sans" font-weight="bold" font-size="13" text-anchor="middle" fill="#000">?</text></svg><div class="t" style="left:1104px;top:359px;"><span class="l">diy</span></div><div class="a" style="left:1073px;top:388px;width:10px;height:1px;background:repeating-linear-gradient(90deg,#777 0 1px,transparent 1px 2px)"></div><svg class="a" style="left:1085px;top:380px" width="14" height="16"><rect x=".5" y=".5" width="11" height="15" fill="url(#fy)" stroke="#ebc452"/><rect x="10.5" y="9.5" width="2.5" height="6" fill="#fbdf86" stroke="#ebc452"/><text x="6" y="13" font-family="Liberation Sans" font-weight="bold" font-size="13" text-anchor="middle" fill="#000">?</text></svg><div class="t" style="left:1104px;top:379px;"><span class="l">doodle</span></div><div class="a" style="left:1073px;top:408px;width:10px;height:1px;background:repeating-linear-gradient(90deg,#777 0 1px,transparent 1px 2px)"></div><svg class="a" style="left:1085px;top:400px" width="14" height="16"><rect x=".5" y=".5" width="11" height="15" fill="url(#fy)" stroke="#ebc452"/><rect x="10.5" y="9.5" width="2.5" height="6" fill="#fbdf86" stroke="#ebc452"/><text x="6" y="13" font-family="Liberation Sans" font-weight="bold" font-size="13" text-anchor="middle" fill="#000">?</text></svg><div class="t" style="left:1104px;top:399px;"><span class="l">editor</span></div><div class="a" style="left:1073px;top:428px;width:10px;height:1px;background:repeating-linear-gradient(90deg,#777 0 1px,transparent 1px 2px)"></div><svg class="a" style="left:1085px;top:420px" width="14" height="16"><rect x=".5" y=".5" width="11" height="15" fill="url(#fy)" stroke="#ebc452"/><rect x="10.5" y="9.5" width="2.5" height="6" fill="#fbdf86" stroke="#ebc452"/><text x="6" y="13" font-family="Liberation Sans" font-weight="bold" font-size="13" text-anchor="middle" fill="#000">?</text></svg><div class="t" style="left:1104px;top:419px;"><span class="l">feed</span></div></div></div><div class="sb" style="left:1902px;top:238px;width:16px;height:196px"></div><div class="thumb" style="left:1902px;top:309px;width:16px;height:24px"></div><svg class="a" style="left:1905px;top:243px" width="10" height="7"><path d="M1 5.5l4-4 4 4" fill="none" stroke="#606060" stroke-width="1.8"/></svg><svg class="a" style="left:1905px;top:422px" width="10" height="7"><path d="M1 1.5l4 4 4-4" fill="none" stroke="#606060" stroke-width="1.8"/></svg><div class="a" style="left:966px;top:435px;width:952px;height:5px;background:#f0f0f0"></div><div class="a" style="left:964px;top:440px;width:954px;height:2px;background:#6a6a6a"></div><div class="a" style="left:966px;top:442px;width:952px;height:358px;background:#fff"></div><div class="t" style="left:972px;top:446px;">文件名</div><svg class="a" style="left:1157px;top:442px" width="9" height="5"><path d="M.5 4.5l4-4 4 4" fill="none" stroke="#777" stroke-width="1"/></svg><div class="a" style="left:1356px;top:443px;width:1px;height:23px;background:#e5e5e5"></div><div class="a" style="left:1610px;top:443px;width:1px;height:23px;background:#e5e5e5"></div><div class="a" style="left:1690px;top:443px;width:1px;height:23px;background:#e5e5e5"></div><div class="a" style="left:1775px;top:443px;width:1px;height:23px;background:#e5e5e5"></div><div class="t" style="left:1617px;top:446px;">权限</div><div class="t" style="left:1697px;top:446px;">所有者<span class="l">/</span>组</div><div class="a" style="left:986px;top:508px;width:790px;height:21px;background:#efefef"></div><svg class="a" style="left:972px;top:468px" width="14" height="16"><rect x=".5" y=".5" width="11" height="15" fill="url(#fy)" stroke="#ebc452"/><rect x="10.5" y="9.5" width="2.5" height="6" fill="#fbdf86" stroke="#ebc452"/></svg><div class="t" style="left:988px;top:469px;"><span class="l">..</span></div><svg class="a" style="left:972px;top:489px" width="14" height="16"><rect x=".5" y=".5" width="11" height="15" fill="url(#fy)" stroke="#ebc452"/><rect x="10.5" y="9.5" width="2.5" height="6" fill="#fbdf86" stroke="#ebc452"/></svg><div class="t" style="left:988px;top:490px;"><span class="l">avatar</span></div><div class="t" style="left:1604px;top:490px;transform:translateX(-100%);letter-spacing:-.3px"><span class="l">2022/12/26 8...</span></div><svg class="a" style="left:972px;top:510px" width="14" height="16"><rect x=".5" y=".5" width="11" height="15" fill="url(#fg)" stroke="#a3b47f"/><rect x="10.5" y="9.5" width="2.5" height="6" fill="#b7c694" stroke="#a3b47f"/></svg><div class="t" style="left:988px;top:511px;"><span class="l">image</span></div><div class="t" style="left:1604px;top:511px;transform:translateX(-100%);letter-spacing:-.3px"><span class="l">2023/1/12 17...</span></div><svg class="a" style="left:972px;top:531px" width="14" height="16"><rect x=".5" y=".5" width="11" height="15" fill="url(#fy)" stroke="#ebc452"/><rect x="10.5" y="9.5" width="2.5" height="6" fill="#fbdf86" stroke="#ebc452"/></svg><div class="t" style="left:988px;top:532px;"><span class="l">js</span></div><div class="t" style="left:1604px;top:532px;transform:translateX(-100%);letter-spacing:-.3px"><span class="l">2022/12/26 8...</span></div><svg class="a" style="left:972px;top:552px" width="14" height="16"><rect x=".5" y=".5" width="11" height="15" fill="url(#fy)" stroke="#ebc452"/><rect x="10.5" y="9.5" width="2.5" height="6" fill="#fbdf86" stroke="#ebc452"/></svg><div class="t" style="left:988px;top:553px;"><span class="l">space</span></div><div class="t" style="left:1604px;top:553px;transform:translateX(-100%);letter-spacing:-.3px"><span class="l">2022/12/26 8...</span></div><svg class="a" style="left:972px;top:573px" width="14" height="16"><rect x=".5" y=".5" width="11" height="15" fill="url(#fy)" stroke="#ebc452"/><rect x="10.5" y="9.5" width="2.5" height="6" fill="#fbdf86" stroke="#ebc452"/></svg><div class="t" style="left:988px;top:574px;"><span class="l">topic</span></div><div class="t" style="left:1604px;top:574px;transform:translateX(-100%);letter-spacing:-.3px"><span class="l">2022/12/26 8...</span></div><svg class="a" style="left:971px;top:594px" width="14" height="16"><path d="M.5 .5h9l3 3v12h-12z" fill="#fafafa" stroke="#a8a8a8"/><circle cx="6.5" cy="9" r="3.3" fill="#3cb83c"/><rect x="4.5" y="8.5" width="4" height="1" fill="#fff"/></svg><div class="t" style="left:988px;top:595px;"><span class="l">index.htm</span></div><div class="t" style="left:1604px;top:595px;transform:translateX(-100%);letter-spacing:-.3px"><span class="l">2022/12/26 8...</span></div><div class="a" style="left:966px;top:800px;width:952px;height:27px;background:#f0f0f0;border-top:1px solid #dcdcdc;border-bottom:1px solid #fff"></div><div class="a" style="left:966px;top:825px;width:952px;height:1px;background:#dcdcdc"></div><div class="a" style="left:1917px;top:800px;width:1px;height:25px;background:#dcdcdc"></div><div class="t" style="left:968px;top:806px;">选择了<span class="l"> 1 </span>个文件夹。</div>

<!-- queue -->
<div class="a" style="left:0px;top:827px;width:1920px;height:4px;background:#f0f0f0"></div><div class="a" style="left:0px;top:831px;width:1918px;height:155px;background:#fff;border-top:1px solid #828790;border-left:1px solid #828790;border-bottom:1px solid #828790;border-right:1px solid #828790"></div><div class="a" style="left:181px;top:833px;width:1px;height:24px;background:#e5e5e5"></div><div class="a" style="left:241px;top:833px;width:1px;height:24px;background:#e5e5e5"></div><div class="a" style="left:421px;top:833px;width:1px;height:24px;background:#e5e5e5"></div><div class="a" style="left:501px;top:833px;width:1px;height:24px;background:#e5e5e5"></div><div class="a" style="left:561px;top:833px;width:1px;height:24px;background:#e5e5e5"></div><div class="a" style="left:710px;top:833px;width:1px;height:24px;background:#e5e5e5"></div><div class="t" style="left:8px;top:837px;">服务器<span class="l">/</span>本地文件</div><div class="t" style="left:199px;top:837px;">方向</div><div class="t" style="left:247px;top:837px;">远程文件</div><div class="t" style="left:471px;top:837px;">大小</div><div class="t" style="left:507px;top:837px;">优先级</div><div class="t" style="left:567px;top:837px;">状态</div><div class="t" style="left:1630px;top:944px;font-size:20px;line-height:24px;height:24px;color:#c4c4c4;letter-spacing:.6px">激活 Windows</div><div class="t" style="left:1631px;top:971px;font-size:15.5px;line-height:18px;color:#c8c8c8;overflow:hidden;height:16px">转到“设置”以激活 Windows。</div><div class="a" style="left:0px;top:986px;width:1920px;height:29px;background:linear-gradient(#f4f4f4 0px,#f0f0f0 3px,#d9d9d9 20px,#e6e6e6 27px)"></div><div class="a" style="left:0px;top:1015px;width:1920px;height:1px;background:#d8d8d8"></div><div class="a" style="left:0px;top:1016px;width:1920px;height:24px;background:#f0f0f0"></div><div class="a" style="left:5px;top:989px;width:77px;height:24px;background:linear-gradient(#fff,#f6f6f6 60%,#e8e8e8);border:1px solid #8c8c8c;border-top:none;border-radius:0 0 4px 4px"></div><div class="t" style="left:13px;top:990px;font-weight:bold">列队的文件</div><div class="a" style="left:82px;top:989px;width:63px;height:23px;background:linear-gradient(#eee,#e4e4e4 55%,#d6d6d6 60%,#dcdcdc);border:1px solid #a6a6a6;border-radius:0 0 4px 4px"></div><div class="t" style="left:89px;top:991px;">传输失败</div><div class="a" style="left:146px;top:989px;width:76px;height:23px;background:linear-gradient(#eee,#e4e4e4 55%,#d6d6d6 60%,#dcdcdc);border:1px solid #a6a6a6;border-radius:0 0 4px 4px"></div><div class="t" style="left:153px;top:991px;">成功的传输</div>

<!-- dialog -->
<div class="a" style="left:1302px;top:407px;width:280px;height:421px;background:#f0f0f0;border:1px solid #5f5f5f;box-shadow:0 2px 14px 2px rgba(0,0,0,.28)"></div><div class="a" style="left:1303px;top:408px;width:278px;height:30px;background:#fff"></div><div class="t" style="left:1311px;top:415px;">改变文件属性</div><svg class="a" style="left:1561px;top:417px" width="11" height="11"><path d="M.5 .5l10 10M10.5 .5l-10 10" stroke="#111" stroke-width="1.1"/></svg><div class="t" style="left:1309px;top:444px;">请为文件夹<span class="l">“image”</span>选择新的属性。</div><div class="a" style="left:1309px;top:476px;width:266px;height:39px;border:1px solid #dcdcdc"></div><div class="a" style="left:1316px;top:468px;width:64px;height:16px;background:#f0f0f0"></div><div class="t" style="left:1318px;top:468px;">所有者权限</div><svg class="a" style="left:1318px;top:493px" width="13" height="13"><rect x=".5" y=".5" width="12" height="12" fill="#fff" stroke="#333"/><rect x="3" y="3" width="7" height="7" fill="#333"/></svg><div class="t" style="left:1334px;top:490px;">读取<span class="l">(<u>R</u>)</span></div><svg class="a" style="left:1388px;top:493px" width="13" height="13"><rect x=".5" y=".5" width="12" height="12" fill="#fff" stroke="#333"/><rect x="3" y="3" width="7" height="7" fill="#333"/></svg><div class="t" style="left:1404px;top:490px;">写入<span class="l">(<u>W</u>)</span></div><svg class="a" style="left:1462px;top:493px" width="13" height="13"><rect x=".5" y=".5" width="12" height="12" fill="#fff" stroke="#333"/><rect x="3" y="3" width="7" height="7" fill="#333"/></svg><div class="t" style="left:1478px;top:490px;">执行<span class="l">(<u>E</u>)</span></div><div class="a" style="left:1309px;top:530px;width:266px;height:39px;border:1px solid #dcdcdc"></div><div class="a" style="left:1316px;top:522px;width:40px;height:16px;background:#f0f0f0"></div><div class="t" style="left:1318px;top:522px;">组权限</div><svg class="a" style="left:1318px;top:547px" width="13" height="13"><rect x=".5" y=".5" width="12" height="12" fill="#fff" stroke="#333"/><rect x="3" y="3" width="7" height="7" fill="#333"/></svg><div class="t" style="left:1334px;top:544px;">读取<span class="l">(<u>A</u>)</span></div><svg class="a" style="left:1388px;top:547px" width="13" height="13"><rect x=".5" y=".5" width="12" height="12" fill="#fff" stroke="#333"/><rect x="3" y="3" width="7" height="7" fill="#333"/></svg><div class="t" style="left:1404px;top:544px;">写入<span class="l">(<u>R</u>)</span></div><svg class="a" style="left:1458px;top:547px" width="13" height="13"><rect x=".5" y=".5" width="12" height="12" fill="#fff" stroke="#333"/><rect x="3" y="3" width="7" height="7" fill="#333"/></svg><div class="t" style="left:1474px;top:544px;">执行<span class="l">(<u>X</u>)</span></div><div class="a" style="left:1309px;top:584px;width:266px;height:39px;border:1px solid #dcdcdc"></div><div class="a" style="left:1316px;top:576px;width:52px;height:16px;background:#f0f0f0"></div><div class="t" style="left:1318px;top:576px;">公共权限</div><svg class="a" style="left:1318px;top:601px" width="13" height="13"><rect x=".5" y=".5" width="12" height="12" fill="#fff" stroke="#333"/><rect x="3" y="3" width="7" height="7" fill="#333"/></svg><div class="t" style="left:1334px;top:598px;">读取<span class="l">(<u>D</u>)</span></div><svg class="a" style="left:1389px;top:601px" width="13" height="13"><rect x=".5" y=".5" width="12" height="12" fill="#fff" stroke="#333"/><rect x="3" y="3" width="7" height="7" fill="#333"/></svg><div class="t" style="left:1405px;top:598px;">写入<span class="l">(<u>I</u>)</span></div><svg class="a" style="left:1455px;top:601px" width="13" height="13"><rect x=".5" y=".5" width="12" height="12" fill="#fff" stroke="#333"/><rect x="3" y="3" width="7" height="7" fill="#333"/></svg><div class="t" style="left:1471px;top:598px;">执行<span class="l">(<u>C</u>)</span></div><div class="t" style="left:1309px;top:634px;">数字值<span class="l">(<u>N</u>):</span></div><div class="a" style="left:1372px;top:630px;width:111px;height:25px;background:#fff;border:1px solid #0078d7"></div><div class="t" style="left:1377px;top:634px;"><span class="l">xxx</span></div><div class="t" style="left:1309px;top:662px;">您可以在任何地方使用<span class="l"> x </span>来保持原先文件的权限。</div><svg class="a" style="left:1309px;top:694px" width="13" height="13"><rect x=".5" y=".5" width="12" height="12" fill="#fff" stroke="#333"/></svg><div class="t" style="left:1325px;top:691px;">递归处理子目录<span class="l">(<u>U</u>)</span></div><svg class="a" style="left:1330px;top:715px" width="14" height="14"><circle cx="6.5" cy="7" r="6" fill="#fff" stroke="#cfcfcf"/><circle cx="6.5" cy="7" r="3.5" fill="#c8c8c8"/></svg><div class="t" style="left:1346px;top:714px;color:#a0a0a0">应用到所有文件和目录<span class="l">(<u>P</u>)</span></div><svg class="a" style="left:1330px;top:738px" width="14" height="14"><circle cx="6.5" cy="7" r="6" fill="#fff" stroke="#cfcfcf"/></svg><div class="t" style="left:1346px;top:737px;color:#a0a0a0">只应用到文件<span class="l">(<u>F</u>)</span></div><svg class="a" style="left:1330px;top:761px" width="14" height="14"><circle cx="6.5" cy="7" r="6" fill="#fff" stroke="#cfcfcf"/></svg><div class="t" style="left:1346px;top:760px;color:#a0a0a0">只应用到目录<span class="l">(<u>L</u>)</span></div><div class="a" style="left:1309px;top:783px;width:266px;height:1px;background:#a0a0a0"></div><div class="a" style="left:1309px;top:784px;width:266px;height:1px;background:#fff"></div><div class="a" style="left:1388px;top:792px;width:86px;height:28px;background:#e1e1e1;border:2px solid #0078d7"></div><div class="t" style="left:1388px;top:798px;width:86px;text-align:center">确定<span class="l">(</span><u><span class="l">O</span></u><span class="l">)</span></div><div class="a" style="left:1484px;top:792px;width:86px;height:28px;background:#e1e1e1;border:1px solid #adadad"></div><div class="t" style="left:1484px;top:798px;width:86px;text-align:center">取消</div>

<!-- taskbar -->
<svg class="a" style="left:1716px;top:1019px" width="36" height="18"><circle cx="8" cy="9" r="5.2" fill="#555"/><circle cx="8" cy="9" r="6.3" fill="none" stroke="#555" stroke-width="2.2" stroke-dasharray="2.2 1.8"/><circle cx="8" cy="9" r="3.2" fill="#f0f0f0"/><text x="6" y="12" font-size="8" fill="#2a8a4a" font-family="Liberation Sans">A</text><circle cx="24" cy="9" r="6.5" fill="none" stroke="#555" stroke-width="1.3"/><circle cx="24" cy="9" r="4" fill="none" stroke="#777" stroke-width="1"/></svg><div class="t" style="left:1759px;top:1020px;">队列<span class="l">: </span>空</div><div class="a" style="left:1880px;top:1018px;width:1px;height:20px;background:#d0d0d0"></div><svg class="a" style="left:1885px;top:1021px" width="32" height="14"><defs><radialGradient id="gg" cx=".35" cy=".35" r=".7"><stop offset="0" stop-color="#8fe08f"/><stop offset=".5" stop-color="#1c8a1c"/><stop offset="1" stop-color="#0a4a0a"/></radialGradient><radialGradient id="rg" cx=".35" cy=".35" r=".7"><stop offset="0" stop-color="#f09090"/><stop offset=".5" stop-color="#a01010"/><stop offset="1" stop-color="#500000"/></radialGradient></defs><circle cx="7" cy="7" r="6" fill="url(#gg)"/><circle cx="24" cy="7" r="6" fill="url(#rg)"/></svg><div class="a" style="left:0px;top:1040px;width:1920px;height:40px;background:linear-gradient(90deg,#223a44 0%,#223a44 30%,#20343f 60%,#1d2b40 85%,#1c2945 100%)"></div><svg class="a" style="left:16px;top:1052px" width="17" height="17"><path d="M0 2.4l6.8-.9v6.6H0z M7.8 1.3L17 0v8.1H7.8z M0 9h6.8v6.6L0 14.6z M7.8 9H17v8l-9.2-1.3z" fill="#fff"/></svg><svg class="a" style="left:64px;top:1050px" width="22" height="20"><path d="M0 2h8l2 2h12v15H0z" fill="#e8a800"/><rect x="0" y="5" width="22" height="14" fill="#ffd24d"/><rect x="4" y="12" width="14" height="3" fill="#1f7ad6"/><rect x="6" y="15" width="3" height="4" fill="#1f7ad6"/><rect x="13" y="15" width="3" height="4" fill="#1f7ad6"/></svg><svg class="a" style="left:111px;top:1048px" width="26" height="26"><path d="M19.5 12.5A7 7 0 1 0 17.4 17.4" fill="none" stroke="#2a9fe6" stroke-width="3.4"/><rect x="6" y="11" width="13.5" height="2.8" fill="#2a9fe6"/><path d="M3.5 22C0 18 11 3 22 2.5c3 0 2.5 3.5-.5 7" fill="none" stroke="#f2c01c" stroke-width="1.8"/></svg><svg class="a" style="left:161px;top:1048px" width="24" height="24"><circle cx="12" cy="12" r="10" fill="#46c046"/><circle cx="12" cy="12" r="10" fill="none" stroke="#d8f5d8" stroke-width="1"/><path d="M17.3 12A5.3 5.3 0 1 0 15.8 15.8" fill="none" stroke="#fff" stroke-width="2.4"/><rect x="6.8" y="10.9" width="10.5" height="2.2" fill="#fff"/><path d="M2.5 21.5c2-2 5-2.5 7-2M15 2.5c2.5-.5 5 0 6.5 1" stroke="#2a9a2a" stroke-width="1.5" fill="none"/></svg><div class="a" style="left:198px;top:1040px;width:48px;height:37px;background:#4a5d67"></div><div class="a" style="left:198px;top:1077px;width:48px;height:3px;background:#76b9ed"></div><svg class="a" style="left:210px;top:1048px" width="24" height="24" viewBox="0 0 16 16"><rect x="0" y="0" width="16" height="16" fill="#b00000"/><rect x="0.5" y="0.5" width="15" height="15" fill="none" stroke="#7a0000" stroke-dasharray="1 1"/><path d="M3.2 13 L5 3.5 H9.3 L9 5.2 H6.7 L6.4 7.2 H8.6 L8.3 8.8 H6.1 L5.3 13 Z M8.6 13 L8.9 11.6 L11.6 8.9 H9.5 L9.8 7.5 H14 L13.7 8.9 L11 11.6 H13.4 L13.1 13 Z" fill="#fff"/></svg><div class="a" style="left:251px;top:1077px;width:40px;height:3px;background:#76b9ed"></div><svg class="a" style="left:259px;top:1048px" width="24" height="24"><circle cx="12" cy="12" r="11.5" fill="#db4437"/><path d="M12 12L1.9 6.5A11.5 11.5 0 0 0 8 23z" fill="#0f9d58"/><path d="M12 12L8 23A11.5 11.5 0 0 0 22.1 6.5z" fill="#ffcd40"/><path d="M12 12L2 6.3A11.5 11.5 0 0 1 12 .5 11.5 11.5 0 0 1 22 6.3z" fill="#db4437"/><circle cx="12" cy="12" r="5.3" fill="#fff"/><circle cx="12" cy="12" r="4.2" fill="#4285f4"/></svg><div class="a" style="left:300px;top:1077px;width:40px;height:3px;background:#76b9ed"></div><svg class="a" style="left:306px;top:1048px" width="24" height="24"><path d="M12 4C5 4 1 9 2 14c1 4 4 2 5 3s0 3 3 4c6 1 11-3 11-8 0-5-4-9-9-9z" fill="#d8e4ee"/><circle cx="7" cy="11" r="1.8" fill="#e84a3a"/><circle cx="11" cy="8" r="1.8" fill="#3ab04a"/><circle cx="15.5" cy="8.5" r="1.8" fill="#f0b820"/><circle cx="8.5" cy="15.5" r="1.8" fill="#2a7ad6"/><path d="M13 17L22 2" stroke="#c8782a" stroke-width="2.2"/><path d="M13 17l-2 3 3-1z" fill="#444"/></svg><svg class="a" style="left:1668px;top:1053px" width="16" height="16"><circle cx="8" cy="8" r="7.5" fill="#1e8fe0"/><path d="M3 9c2-1 4-1 5 0 1-1 3-1 5 0M4 6c1.5-.6 3-.6 4 0 1-.6 2.5-.6 4 0" stroke="#fff" stroke-width="1.2" fill="none"/></svg><svg class="a" style="left:1692px;top:1053px" width="17" height="17"><circle cx="8" cy="8" r="7.5" fill="#f2c12e"/><rect x="4.5" y="3.5" width="6" height="8" fill="none" stroke="#333" stroke-width="1.2"/><circle cx="12" cy="12" r="3.6" fill="#22cc44"/></svg><svg class="a" style="left:1716px;top:1052px" width="16" height="16"><rect x="0" y="0" width="16" height="16" fill="#fff"/><circle cx="8" cy="8" r="6.5" fill="#5ac23a"/><circle cx="8" cy="8" r="4.5" fill="none" stroke="#fff" stroke-width="1.2"/><path d="M6 8h4M8 6v4" stroke="#fff" stroke-width="1.3"/></svg><svg class="a" style="left:1740px;top:1052px" width="18" height="18"><circle cx="8" cy="8" r="6.8" fill="none" stroke="#fff" stroke-width="1"/><ellipse cx="8" cy="8" rx="3" ry="6.8" fill="none" stroke="#fff" stroke-width="1"/><path d="M1.5 6h13M1.5 10h13" stroke="#fff" stroke-width="1"/><circle cx="13" cy="13" r="3.8" fill="#1d2b40" stroke="#fff" stroke-width="1"/><path d="M11 11l4 4" stroke="#fff" stroke-width="1"/></svg><svg class="a" style="left:1763px;top:1053px" width="18" height="16"><path d="M1 5h3l4-4v14l-4-4H1z" fill="none" stroke="#fff" stroke-width="1"/><path d="M10.5 5.5a3 3 0 0 1 0 5M12.5 3.5a6 6 0 0 1 0 9M14.5 1.5a9 9 0 0 1 0 13" fill="none" stroke="#fff" stroke-width="1"/></svg><div class="t" style="left:1788px;top:1052px;color:#fff;font-size:13px">英</div><svg class="a" style="left:1816px;top:1052px" width="16" height="16"><rect x="0" y="0" width="16" height="16" rx="2" fill="#2a8ae6"/><path d="M3 3h10M5 6h6M5 6v6M11 6v6M2 12.5h12" stroke="#fff" stroke-width="1.3"/></svg><div class="t n" style="left:1864px;top:1043px;color:#fff">16:10</div><div class="t n" style="left:1849px;top:1062px;color:#fff;letter-spacing:.6px">2023/1/12</div><div class="a" style="left:1915px;top:1040px;width:1px;height:40px;background:#55606a"></div><svg class="a" style="left:1620px;top:1016px" width="300" height="64"><path d="M3 5L56 12 22 15 30 24z" fill="#fff" opacity=".95"/><path d="M3 5L22 15 44 38 27 42z" fill="#d4d8de" opacity=".95"/><path d="M22 15L56 12 38 22z" fill="#e8eaee" opacity=".9"/><text x="62" y="27" font-family="Liberation Sans" font-style="italic" font-weight="bold" font-size="29" fill="#5b9be2" opacity=".8" textLength="124" lengthAdjust="spacingAndGlyphs">DISCUZ!</text><text x="195" y="27" font-family="Liberation Sans" font-size="22" fill="#5b9be2" opacity=".8" textLength="84" lengthAdjust="spacingAndGlyphs">应用中心</text><text x="161" y="44" font-family="Liberation Sans" font-size="15" fill="#4a86d8" opacity=".8" textLength="121" lengthAdjust="spacingAndGlyphs">addon.dismall.com</text></svg>

</body></html>
